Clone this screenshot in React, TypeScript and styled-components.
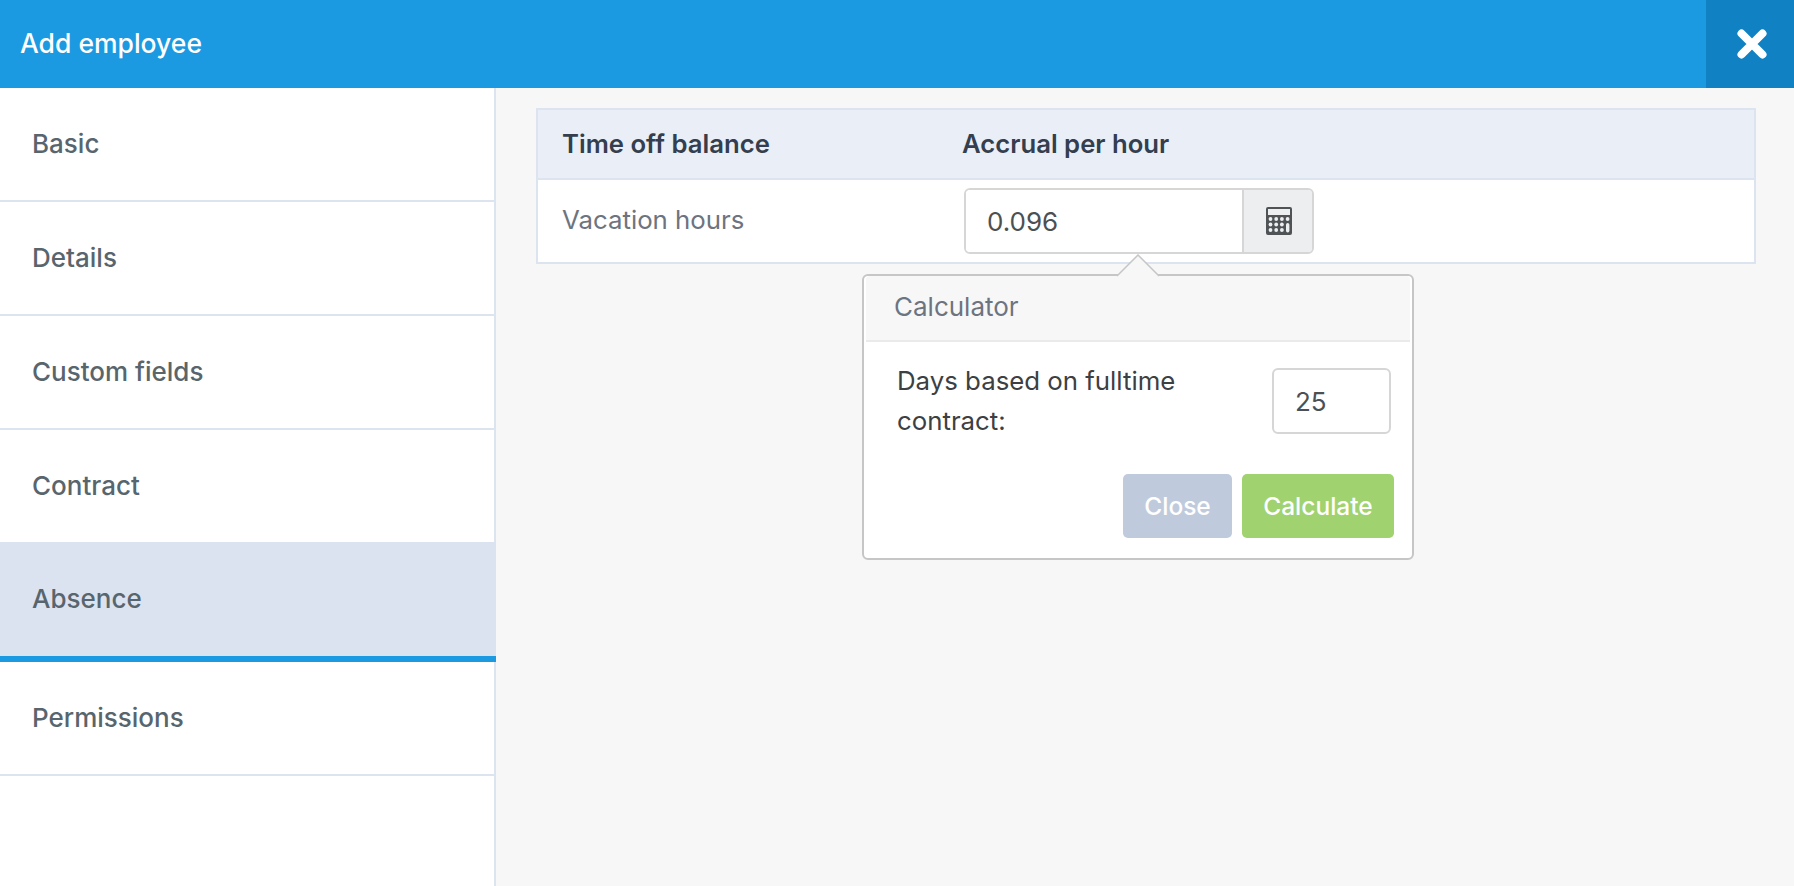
import React from 'react';
import styled, { createGlobalStyle } from 'styled-components';

const GlobalStyle = createGlobalStyle`
    html, body {
        margin: 0;
        padding: 0;
        height: 100%;
        overflow: hidden;
    }
    body {
        font-family: 'Inter', 'Lato', sans-serif;
        background: #f7f7f7;
    }
    #root {
        height: 100%;
    }
`;

const Page = styled.div`
    height: 886px;
    display: flex;
    flex-direction: column;
`;
const Header = styled.header`
    height: 88px;
    flex: none;
    display: flex;
    align-items: center;
    justify-content: space-between;
    background: #1b9ae2;
`;
const Title = styled.h1`
    margin: 0 0 2px 20px;
    font-size: 26.5px;
    font-weight: 500;
    color: #fff;
`;
const CloseButton = styled.button`
    width: 88px;
    height: 88px;
    border: 0;
    padding: 0 0 0 4px;
    display: flex;
    align-items: center;
    justify-content: center;
    background: #1081c2;
`;
const Body = styled.div`
    flex: 1;
    display: flex;
    min-height: 0;
`;
const Sidebar = styled.nav`
    width: 494px;
    flex: none;
    background: #fff;
    border-right: 2px solid #dce4f0;
`;
const SideItem = styled.div<{ $active?: boolean; $flush?: boolean }>`
    height: ${props => (props.$active ? '120px' : props.$flush ? '112px' : '114px')};
    box-sizing: border-box;
    display: flex;
    align-items: center;
    padding: 0 0 2px 32px;
    font-size: 26px;
    font-weight: 500;
    color: #58656d;
    background: ${props => (props.$active ? '#dbe3f0' : '#fff')};
    border-bottom: ${props =>
        props.$active ? '6px solid #1b9ae2' : props.$flush ? '0' : '2px solid #dce4f0'};
    margin-right: ${props => (props.$active ? '-2px' : '0')};
`;
const Main = styled.main`
    flex: 1;
    padding: 20px 38px 0 40px;
`;
const Table = styled.div`
    border: 2px solid #dce4f0;
    background: #fff;
`;
const Row = styled.div<{ $head?: boolean }>`
    display: grid;
    grid-template-columns: 424px 1fr;
    height: ${props => (props.$head ? '70px' : '82px')};
    box-sizing: border-box;
    background: ${props => (props.$head ? '#e9eef7' : '#fff')};
    border-bottom: ${props => (props.$head ? '2px solid #dce4f0' : '0')};
`;
const HeadCell = styled.div`
    display: flex;
    align-items: center;
    padding-bottom: 2px;
    font-size: 25.7px;
    font-weight: 600;
    color: #343e4e;
    &:first-child {
        padding-left: 24px;
    }
`;
const LabelCell = styled.div`
    padding: 24px 0 0 24px;
    font-size: 25.8px;
    color: #6d7480;
`;
const InputCell = styled.div`
    position: relative;
    padding: 8px 0 0 2px;
`;
const InputGroup = styled.div`
    width: 350px;
    height: 66px;
    box-sizing: border-box;
    display: flex;
    border: 2px solid #d6d6d6;
    border-radius: 6px;
    overflow: hidden;
`;
const TextInput = styled.input<{ $small?: boolean }>`
    font-family: inherit;
    font-size: 26px;
    color: #4d5053;
    background: #fff;
    outline: 0;
    box-sizing: border-box;
    ${props =>
        props.$small
            ? `
        width: 119px;
        height: 66px;
        flex: none;
        margin-right: 3px;
        padding: 0 0 0 21px;
        border: 2px solid #d6d6d6;
        border-radius: 6px;
    `
            : `
        flex: 1;
        min-width: 0;
        padding: 0 0 0 21px;
        border: 0;
    `}
`;
const Addon = styled.div`
    width: 70px;
    flex: none;
    box-sizing: border-box;
    display: flex;
    align-items: center;
    justify-content: center;
    padding-left: 2px;
    background: #edeef0;
    border-left: 2px solid #d6d6d6;
`;
const Popover = styled.div`
    position: absolute;
    left: -100px;
    top: 94px;
    width: 552px;
    height: 286px;
    box-sizing: border-box;
    background: #fff;
    border: 2px solid #c6c6c6;
    border-radius: 6px;
`;
const Arrow = styled.svg`
    position: absolute;
    left: 252px;
    top: -22px;
`;
const PopoverHead = styled.div`
    height: 66px;
    margin: 0 2px;
    box-sizing: border-box;
    display: flex;
    align-items: center;
    padding: 0 0 3px 28px;
    font-size: 26px;
    color: #6d7480;
    background: #f7f7f7;
    border-bottom: 2px solid #eaeaea;
    border-radius: 4px 4px 0 0;
`;
const PopoverBody = styled.div`
    padding: 19px 18px 0 33px;
`;
const FieldRow = styled.div`
    height: 80px;
    display: flex;
    align-items: center;
    justify-content: space-between;
`;
const FieldLabel = styled.div`
    width: 320px;
    font-size: 25.8px;
    line-height: 40px;
    color: #3c4043;
`;
const Actions = styled.div`
    display: flex;
    justify-content: flex-end;
    gap: 10px;
    margin-top: 33px;
`;
const Button = styled.button<{ $variant: 'muted' | 'go' }>`
    height: 64px;
    border: 0;
    border-radius: 5px;
    padding: 0;
    width: ${props => (props.$variant === 'go' ? '152px' : '109px')};
    font-family: inherit;
    font-size: 24.5px;
    font-weight: 500;
    color: #fff;
    background: ${props => (props.$variant === 'go' ? '#a0d26f' : '#bfcbdd')};
`;

const CloseIcon = () => (
    <svg width="32" height="32" viewBox="0 0 32 32" aria-hidden="true">
        <path d="M5.5 5.5L26.5 26.5M26.5 5.5L5.5 26.5" stroke="#fff" strokeWidth="8" strokeLinecap="round" />
    </svg>
);

const CalculatorIcon = () => (
    <svg width="26" height="28" viewBox="0 0 26 28" aria-hidden="true">
        <path
            fillRule="evenodd"
            fill="#505356"
            d="M2 0H24A2 2 0 0 1 26 2V26A2 2 0 0 1 24 28H2A2 2 0 0 1 0 26V2A2 2 0 0 1 2 0ZM2 2V8H24V2Z"
        />
        {[0, 1, 2].map(r =>
            [0, 1, 2, 3].map(c =>
                c === 3 && r > 0 ? null : (
                    <circle key={`${r}${c}`} cx={4.5 + c * 5.7} cy={12 + r * 5.5} r="1.9" fill="#edeef0" />
                ),
            ),
        )}
        <rect x="20" y="16" width="3.4" height="9.5" rx="1.7" fill="#edeef0" />
    </svg>
);

const ITEMS = [
    { label: 'Basic' },
    { label: 'Details' },
    { label: 'Custom fields' },
    { label: 'Contract', flush: true },
    { label: 'Absence', active: true },
    { label: 'Permissions' },
];

export default function App() {
    return (
        <Page>
            <GlobalStyle />
            <Header>
                <Title>Add employee</Title>
                <CloseButton aria-label="Close">
                    <CloseIcon />
                </CloseButton>
            </Header>
            <Body>
                <Sidebar>
                    {ITEMS.map(({ label, active, flush }) => (
                        <SideItem key={label} $active={active} $flush={flush}>
                            {label}
                        </SideItem>
                    ))}
                </Sidebar>
                <Main>
                    <Table>
                        <Row $head>
                            <HeadCell>Time off balance</HeadCell>
                            <HeadCell>Accrual per hour</HeadCell>
                        </Row>
                        <Row>
                            <LabelCell>Vacation hours</LabelCell>
                            <InputCell>
                                <InputGroup>
                                    <TextInput defaultValue="0.096" />
                                    <Addon>
                                        <CalculatorIcon />
                                    </Addon>
                                </InputGroup>
                                <Popover>
                                    <Arrow width="44" height="23" viewBox="0 0 44 23" aria-hidden="true">
                                        <path d="M1 22L22 1L43 22" fill="#f7f7f7" stroke="#c6c6c6" strokeWidth="1.5" />
                                    </Arrow>
                                    <PopoverHead>Calculator</PopoverHead>
                                    <PopoverBody>
                                        <FieldRow>
                                            <FieldLabel>Days based on fulltime contract:</FieldLabel>
                                            <TextInput $small defaultValue="25" />
                                        </FieldRow>
                                        <Actions>
                                            <Button $variant="muted">Close</Button>
                                            <Button $variant="go">Calculate</Button>
                                        </Actions>
                                    </PopoverBody>
                                </Popover>
                            </InputCell>
                        </Row>
                    </Table>
                </Main>
            </Body>
        </Page>
    );
}
